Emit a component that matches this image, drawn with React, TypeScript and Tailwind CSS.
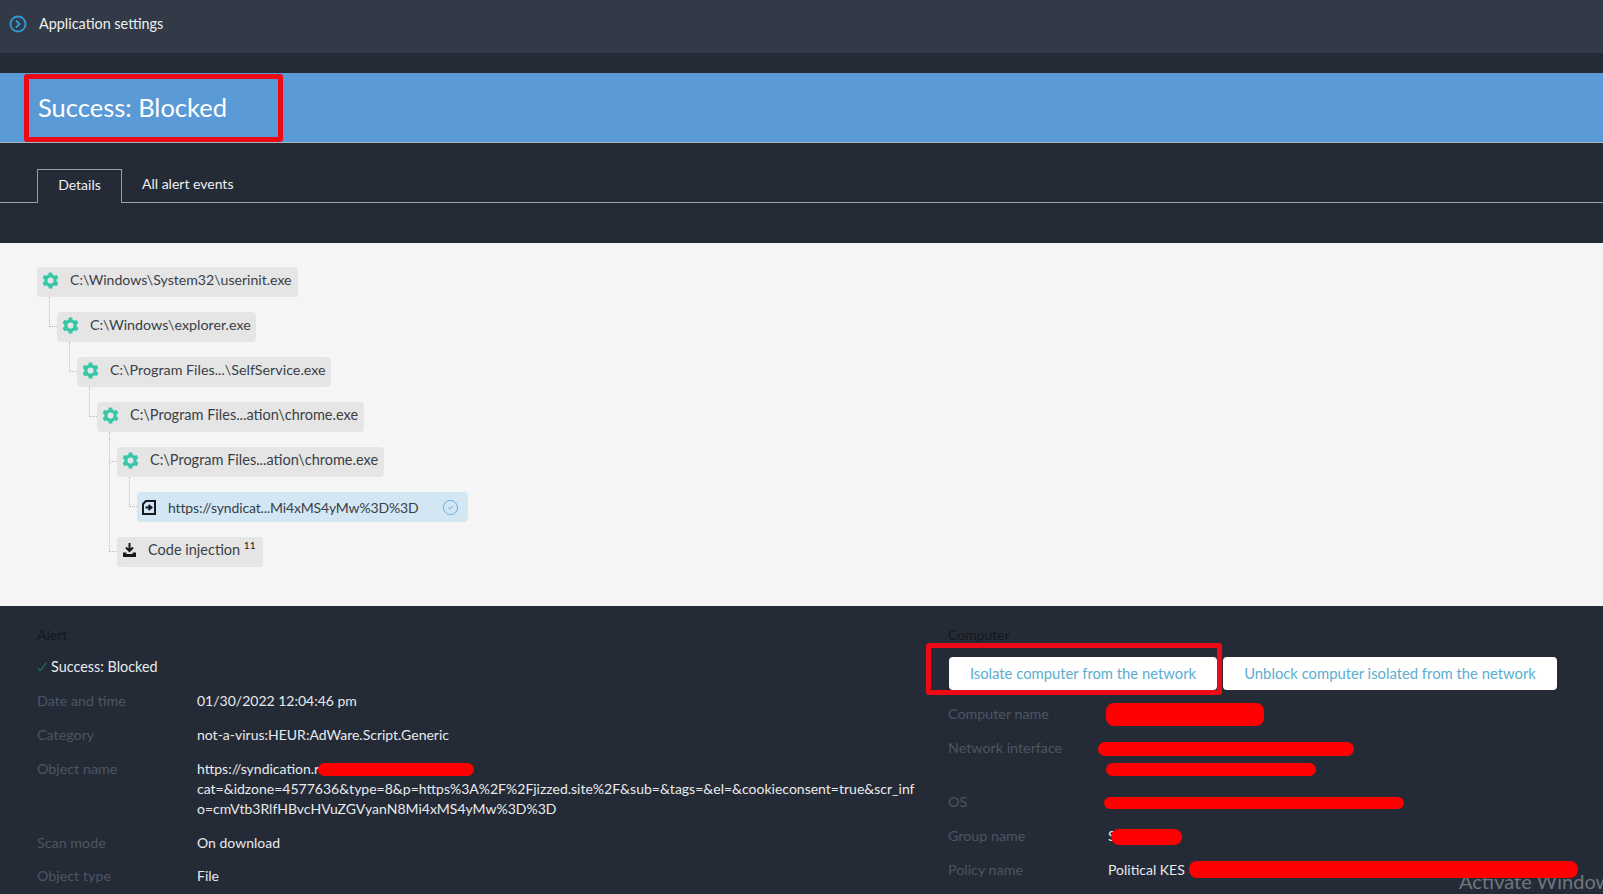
import { CircleCheck, CircleChevronRight } from 'lucide-react';
import type { ReactNode } from 'react';

const font = { fontFamily: 'Lato, sans-serif' };

const GearIcon = () => (
  <svg viewBox="0 0 16 16" className="h-[17px] w-[17px] shrink-0 text-[#35c7a7]">
    <circle cx="8" cy="8" r="4.4" fill="none" stroke="currentColor" strokeWidth="3" />
    {[0, 60, 120, 180, 240, 300].map((angle) => (
      <rect key={angle} x="6.2" y="0.4" width="3.6" height="3" rx="0.6" fill="currentColor" transform={`rotate(${angle} 8 8)`} />
    ))}
  </svg>
);

const FileIcon = () => (
  <svg viewBox="0 0 14 15" className="h-[15px] w-[14px] shrink-0">
    <path d="M4 1h9v13H1V4z" fill="none" stroke="#15191f" strokeWidth="2" />
    <path d="M3.5 7.5h4.5M6.5 5l3 2.5-3 2.5" fill="none" stroke="#15191f" strokeWidth="2" />
  </svg>
);

const InjectIcon = () => (
  <svg viewBox="0 0 15 15" className="h-[15px] w-[15px] shrink-0">
    <path d="M7.5 0v7M4 4.5l3.5 3.5L11 4.5" fill="none" stroke="#15191f" strokeWidth="2" />
    <path d="M1 9.5v4.5h13V9.5h-3.5v1.5h-6V9.5z" fill="#15191f" />
  </svg>
);

type TreeRowProps = {
  indent: string;
  width: string;
  icon: ReactNode;
  gap: string;
  elbow?: string;
  selected?: boolean;
  children: ReactNode;
};

const TreeRow = ({ indent, width, icon, gap, elbow, selected, children }: TreeRowProps) => (
  <div
    className={`relative flex h-[30px] items-center rounded-sm pl-[5px] text-[#3a3f46] ${indent} ${width} ${gap} ${
      selected ? 'bg-[#d3e6f4]' : 'bg-[#e5e5e5] pb-[4px]'
    }`}
  >
    {elbow && (
      <span className={`absolute left-[-8px] w-[8px] border-b border-l border-dotted border-[#bdbdbd] ${elbow}`} />
    )}
    {icon}
    {children}
  </div>
);

const Row = ({ label, children }: { label: string; children: ReactNode }) => (
  <div className="grid grid-cols-[160px_1fr] leading-5">
    <div className="text-[14.3px] text-[#4d5562]">{label}</div>
    <div className="text-[14px] text-[#e8eaec]">{children}</div>
  </div>
);

const Blob = ({ className }: { className: string }) => (
  <span className={`absolute rounded-full bg-[#fe0000] ${className}`} />
);

const App = () => {
  return (
    <div className="relative h-[894px] w-full overflow-hidden bg-[#242b36]" style={font}>
      <header className="flex h-[53px] items-center bg-[#323a48] pb-[5px] pl-[9px] text-[14.4px] text-[#eef0f2]">
        <CircleChevronRight className="h-[18px] w-[18px] text-[#2f9ad6]" strokeWidth={2.5} />
        <span className="ml-[12px]">Application settings</span>
      </header>

      <div className="mt-[20px] flex h-[70px] items-center border-b border-[#a8b4c0] bg-[#5a9ad6] pb-px pl-[38px] text-[25.5px] text-white">
        Success: Blocked
      </div>

      <div className="h-[100px] pt-[26px]">
        <div className="flex h-[34px] border-b border-[#98a0ab] pl-[37px] text-[14px] text-[#eef0f2]">
          <div className="flex h-[34px] w-[85px] items-center justify-center border border-b-0 border-[#98a0ab] bg-[#242b36] pb-[5px]">
            Details
          </div>
          <div className="flex h-[33px] items-center pb-[4px] pl-[20px]">All alert events</div>
        </div>
      </div>

      <section className="flex h-[363px] flex-col gap-[15px] bg-[#f5f5f5] pt-[24px]">
        <TreeRow indent="ml-[37px]" width="w-[261px]" gap="gap-[11px]" icon={<GearIcon />}>
          <span className="text-[14.1px]">C:\Windows\System32\userinit.exe</span>
        </TreeRow>
        <TreeRow indent="ml-[57px]" width="w-[199px]" gap="gap-[11px]" icon={<GearIcon />} elbow="top-[-15px] h-[30px]">
          <span className="text-[14.3px]">C:\Windows\explorer.exe</span>
        </TreeRow>
        <TreeRow indent="ml-[77px]" width="w-[254px]" gap="gap-[11px]" icon={<GearIcon />} elbow="top-[-15px] h-[30px]">
          <span className="text-[14.3px]">C:\Program Files...\SelfService.exe</span>
        </TreeRow>
        <TreeRow indent="ml-[97px]" width="w-[267px]" gap="gap-[11px]" icon={<GearIcon />} elbow="top-[-15px] h-[30px]">
          <span className="text-[14.5px]">C:\Program Files...ation\chrome.exe</span>
        </TreeRow>
        <TreeRow indent="ml-[117px]" width="w-[267px]" gap="gap-[11px]" icon={<GearIcon />} elbow="top-[-15px] h-[30px]">
          <span className="text-[14.5px]">C:\Program Files...ation\chrome.exe</span>
        </TreeRow>
        <TreeRow indent="ml-[137px]" width="w-[331px]" gap="gap-[12px]" icon={<FileIcon />} elbow="top-[-15px] h-[30px]" selected>
          <span className="text-[14px] tracking-[-0.15px]">https://syndicat...Mi4xMS4yMw%3D%3D</span>
          <CircleCheck className="absolute left-[305px] h-[17px] w-[17px] text-[#5aa5dc]" strokeWidth={1.25} />
        </TreeRow>
        <TreeRow indent="ml-[117px]" width="w-[146px]" gap="gap-[11px]" icon={<InjectIcon />} elbow="top-[-105px] h-[120px]">
          <span className="text-[14.5px]">
            Code injection <sup className="relative top-[-6px] text-[10px] text-[#15191f]">11</sup>
          </span>
        </TreeRow>
      </section>

      <section className="grid grid-cols-[911px_1fr] pl-[37px] pt-[19px] text-[14px]">
        <div className="flex flex-col gap-[14px]">
          <div className="leading-5 text-[#14181e]">Alert</div>
          <div className="mt-[-2px] flex items-center gap-[4px] text-[14.4px] leading-5 text-[#e8eaec]">
            <svg viewBox="0 0 10 10" className="h-[10px] w-[10px]">
              <path d="M1 6l2 3 6-8" fill="none" stroke="#1f8a70" strokeWidth="1" />
            </svg>
            Success: Blocked
          </div>
          <Row label="Date and time">01/30/2022 12:04:46 pm</Row>
          <Row label="Category">not-a-virus:HEUR:AdWare.Script.Generic</Row>
          <Row label="Object name">
            <span className="block whitespace-nowrap">https://syndication.r</span>
            <span className="block whitespace-nowrap">
              cat=&amp;idzone=4577636&amp;type=8&amp;p=https%3A%2F%2Fjizzed.site%2F&amp;sub=&amp;tags=&amp;el=&amp;cookieconsent=true&amp;scr_inf
            </span>
            <span className="block whitespace-nowrap">o=cmVtb3RlfHBvcHVuZGVyanN8Mi4xMS4yMw%3D%3D</span>
          </Row>
          <Row label="Scan mode">On download</Row>
          <div className="mt-[-1px]">
            <Row label="Object type">File</Row>
          </div>
        </div>

        <div className="flex flex-col">
          <div className="leading-5 text-[#14181e]">Computer</div>
          <div className="mt-[12px] flex gap-[6px] pl-px">
            <div className="flex h-[33px] w-[268px] items-center justify-center rounded-sm bg-white text-[14.8px] text-[#5aaed0]">
              Isolate computer from the network
            </div>
            <div className="flex h-[33px] w-[334px] items-center justify-center rounded-sm bg-white text-[14.8px] text-[#5aaed0]">
              Unblock computer isolated from the network
            </div>
          </div>
          <div className="mt-[14px] flex flex-col gap-[14px]">
            <Row label="Computer name">&nbsp;</Row>
            <div className="grid grid-cols-[160px_1fr] leading-[20px]">
              <div className="text-[14.3px] text-[#4d5562]">Network interface</div>
              <div className="h-[40px]" />
            </div>
            <Row label="OS">&nbsp;</Row>
            <Row label="Group name">S</Row>
            <Row label="Policy name">Political KES</Row>
          </div>
        </div>
      </section>

      <span className="pointer-events-none absolute left-[1459px] top-[866px] whitespace-nowrap text-[20px] text-[#6f7680]">
        Activate Windows
      </span>

      <div className="pointer-events-none absolute left-[24px] top-[74px] h-[68px] w-[259px] rounded-[3px] border-[5px] border-[#ec0a14]" />
      <div className="pointer-events-none absolute left-[926px] top-[643px] h-[52px] w-[296px] rounded-[3px] border-[5px] border-[#ec0a14]" />

      <Blob className="left-[318px] top-[763px] h-[13px] w-[156px]" />
      <span className="absolute left-[1106px] top-[703px] h-[23px] w-[158px] rounded-lg bg-[#fe0000]" />
      <Blob className="left-[1098px] top-[742px] h-[14px] w-[256px]" />
      <Blob className="left-[1106px] top-[763px] h-[13px] w-[210px]" />
      <Blob className="left-[1104px] top-[797px] h-[12px] w-[300px]" />
      <Blob className="left-[1111px] top-[829px] h-[16px] w-[71px]" />
      <span className="absolute left-[1189px] top-[861px] h-[17px] w-[389px] rounded-lg bg-[#fe0000]" />
    </div>
  );
};

export default App;
